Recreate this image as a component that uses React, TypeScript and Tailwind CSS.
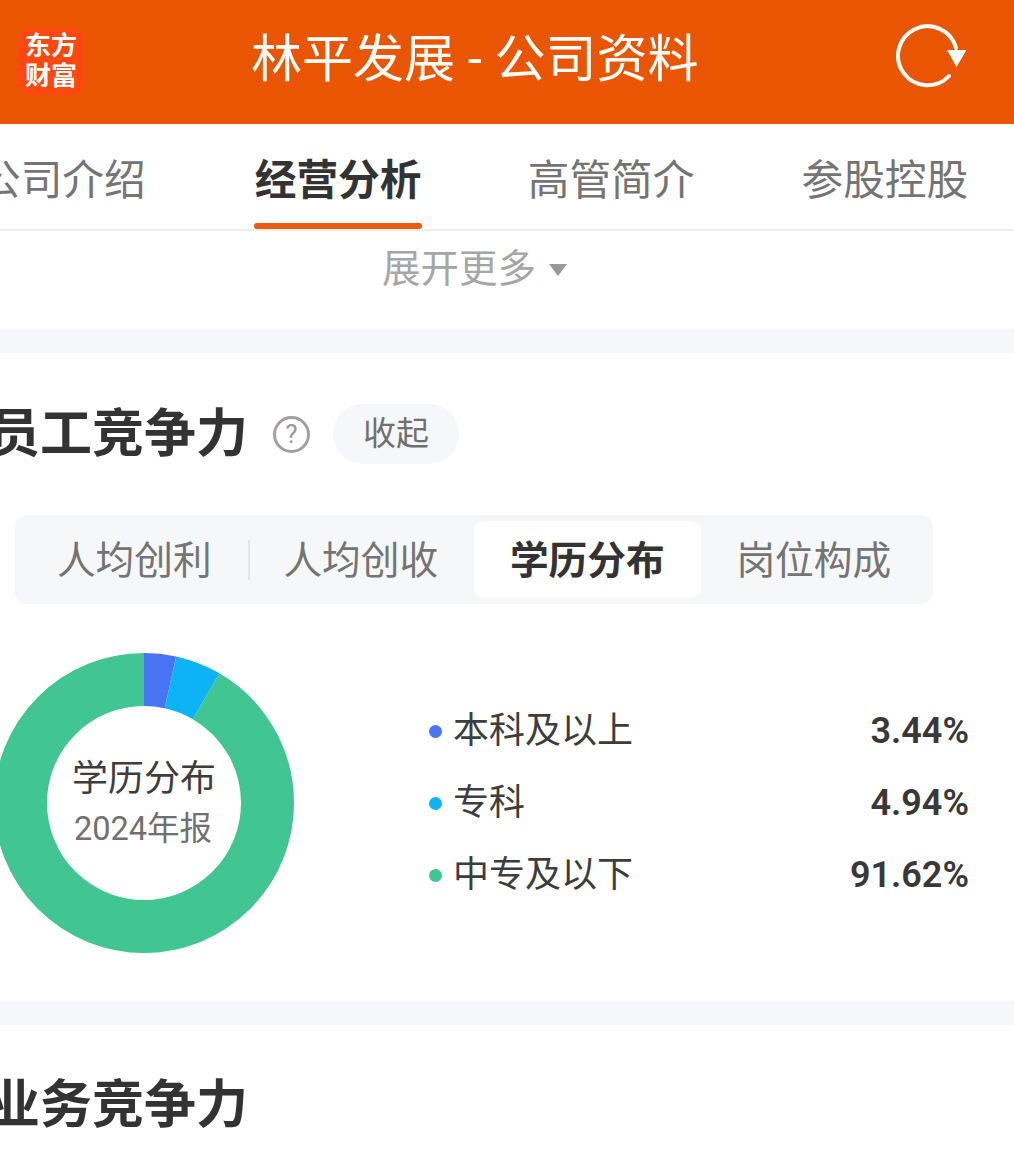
import React from "react";

const font = { fontFamily: '"Roboto", "Noto Sans CJK SC", sans-serif' };

const R = 123.5;
const C = 2 * Math.PI * R;
const segs = [
  { p: 91.62, o: 8.38, c: "#41c592" },
  { p: 3.44, o: 0, c: "#4a72f5" },
  { p: 4.94, o: 3.44, c: "#0db4f5" },
];
const legend = [
  { n: "本科及以上", v: "3.44%", c: "bg-[#4a72f5]" },
  { n: "专科", v: "4.94%", c: "bg-[#0db4f5]" },
  { n: "中专及以下", v: "91.62%", c: "bg-[#41c592]" },
];

function Donut() {
  return (
    <div className="relative w-[300px] h-[300px] ml-[-6px] shrink-0">
      <svg width="300" height="300" viewBox="0 0 300 300" className="block">
        {segs.map((s) => (
          <circle
            key={s.c}
            cx="150"
            cy="150"
            r={R}
            fill="none"
            stroke={s.c}
            strokeWidth="53"
            strokeDasharray={`${(s.p / 100) * C} ${C}`}
            strokeDashoffset={(-s.o / 100) * C}
            transform="rotate(-90 150 150)"
          />
        ))}
      </svg>
      <div className="absolute inset-0 flex flex-col items-center justify-center pt-[2px]">
        <div className="text-[36px] leading-[48px] text-[#3d3d3d]">学历分布</div>
        <div className="text-[32.5px] leading-[48px] text-[#707070] mt-[2px] mr-[2px]">2024年报</div>
      </div>
    </div>
  );
}

export default function App() {
  return (
    <div className="w-[1014px] h-[1164px] overflow-hidden bg-white text-[#333333]" style={font}>
      <header className="h-[124px] bg-[#e95500] flex items-center">
        <div className="ml-[18px] mb-[2px] w-[66px] h-[67px] rounded-[14px] bg-[#ff4810] flex flex-col items-center justify-center text-white text-[26px] leading-[30px] font-bold shrink-0">
          <span>东方</span>
          <span>财富</span>
        </div>
        <h1 className="ml-[167px] text-[51px] leading-[60px] font-normal text-white whitespace-nowrap mb-[4px]">林平发展 - 公司资料</h1>
        <svg className="ml-auto mr-[44px] mb-[10px]" width="76" height="70" viewBox="0 0 76 70" fill="none">
          <path d="M55 54 A29.5 29.5 0 1 1 62 26" stroke="white" strokeWidth="4" strokeLinecap="round" />
          <path d="M53 28 H72.5 L62.5 45 Z" fill="white" />
        </svg>
      </header>

      <nav className="h-[107px] border-b-2 border-[#eeeeee] flex ml-[-21px] w-[1035px] text-[41.7px] leading-[56px] text-[#747474]">
        <div className="pt-[29px] whitespace-nowrap">公司介绍</div>
        <div className="ml-[108px] w-[168px] relative pt-[29px] whitespace-nowrap font-bold text-[#333333]">
          <span className="block ml-[1px]">经营分析</span>
          <span className="absolute left-0 right-0 bottom-0 h-[6px] rounded-full bg-[#eb5a10]" />
        </div>
        <div className="ml-[106px] pt-[29px] whitespace-nowrap">高管简介</div>
        <div className="ml-[107px] pt-[29px] whitespace-nowrap">参股控股</div>
      </nav>

      <button className="h-[98px] w-full flex items-start justify-center gap-[13px] pt-[13px] pr-[65px] text-[38.5px] leading-[50px] text-[#a6a6a6]">
        <span>展开更多</span>
        <span className="mt-[20px] w-0 h-0 border-x-[9px] border-x-transparent border-t-[12px] border-t-[#999999]" />
      </button>

      <div className="h-[24px] bg-[#f6f7f9]" />

      <section className="h-[648px]">
        <div className="flex items-center pt-[50px] ml-[-12px]">
          <h2 className="text-[52px] leading-[64px] font-bold whitespace-nowrap">员工竞争力</h2>
          <span className="ml-[25px] mb-[2px] w-[37px] h-[37px] rounded-full border-[3px] border-[#a0a0a0] text-[#999999] flex items-center justify-center text-[26px] leading-none">?</span>
          <span className="ml-[23px] mb-[2px] w-[126px] h-[60px] rounded-full bg-[#f6f7f9] flex items-center justify-center text-[33px] text-[#707070]">收起</span>
        </div>

        <div className="mt-[48px] ml-[15px] w-[918px] h-[89px] rounded-[12px] bg-[#f6f7f9] grid grid-cols-4 p-[6px] text-[38.7px] text-[#747474]">
          <div className="relative flex items-center justify-center pt-[4px]">
            人均创利
            <span className="absolute right-[-2px] top-[19px] h-[40px] w-[2px] bg-[#e4e5e8]" />
          </div>
          <div className="flex items-center justify-center pt-[4px]">人均创收</div>
          <div className="flex items-center justify-center pt-[4px] bg-white rounded-[10px] font-bold text-[#333333]">学历分布</div>
          <div className="flex items-center justify-center pt-[4px]">岗位构成</div>
        </div>

        <div className="flex items-center mt-[49px]">
          <Donut />
          <div className="ml-[135px] w-[540px] flex flex-col gap-[22px]">
            {legend.map((l) => (
              <div key={l.n} className="flex items-center h-[50px]">
                <span className={`w-[13px] h-[13px] rounded-full ${l.c}`} />
                <span className="ml-[11px] text-[36px] text-[#3d3d3d]">{l.n}</span>
                <span className="ml-auto text-[36px] font-semibold text-[#383838]">{l.v}</span>
              </div>
            ))}
          </div>
        </div>
      </section>

      <div className="h-[24px] bg-[#f6f7f9]" />

      <section className="ml-[-12px] pt-[49px]">
        <h2 className="text-[52px] leading-[64px] font-bold whitespace-nowrap">业务竞争力</h2>
      </section>
    </div>
  );
}
